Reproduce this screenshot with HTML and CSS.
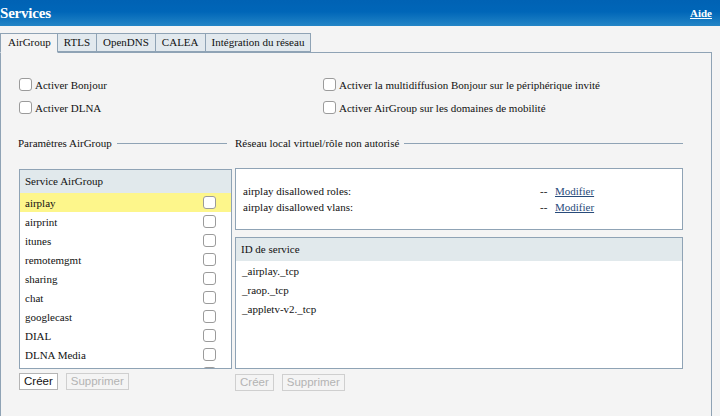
FILE: index.html
```html
<!DOCTYPE html>
<html lang="fr">
<head>
<meta charset="utf-8">
<title>Services</title>
<link rel="stylesheet" href="styles.css">
</head>
<body>
<header class="topbar">
  <h1 class="title">Services</h1>
  <a class="help" href="#">Aide</a>
</header>
<nav class="tabs">
  <span class="tab active">AirGroup</span>
  <span class="tab">RTLS</span>
  <span class="tab">OpenDNS</span>
  <span class="tab">CALEA</span>
  <span class="tab">Intégration du réseau</span>
</nav>
<section class="panel">
  <div class="options">
    <label class="opt"><input type="checkbox" class="cb">Activer Bonjour</label>
    <label class="opt"><input type="checkbox" class="cb">Activer la multidiffusion Bonjour sur le périphérique invité</label>
    <label class="opt"><input type="checkbox" class="cb">Activer DLNA</label>
    <label class="opt"><input type="checkbox" class="cb">Activer AirGroup sur les domaines de mobilité</label>
  </div>
  <div class="cols">
    <div class="col-left">
      <div class="legend legend-left"><span>Paramètres AirGroup</span><i class="rule"></i></div>
      <div class="box list-box">
        <div class="box-head">Service AirGroup</div>
        <ul class="svc-list">
          <li class="svc selected"><span>airplay</span><input type="checkbox" class="cb"></li>
          <li class="svc"><span>airprint</span><input type="checkbox" class="cb"></li>
          <li class="svc"><span>itunes</span><input type="checkbox" class="cb"></li>
          <li class="svc"><span>remotemgmt</span><input type="checkbox" class="cb"></li>
          <li class="svc"><span>sharing</span><input type="checkbox" class="cb"></li>
          <li class="svc"><span>chat</span><input type="checkbox" class="cb"></li>
          <li class="svc"><span>googlecast</span><input type="checkbox" class="cb"></li>
          <li class="svc"><span>DIAL</span><input type="checkbox" class="cb"></li>
          <li class="svc"><span>DLNA Media</span><input type="checkbox" class="cb"></li>
          <li class="svc"><span></span><input type="checkbox" class="cb"></li>
        </ul>
      </div>
      <div class="btns">
        <button class="btn">Créer</button>
        <button class="btn" disabled>Supprimer</button>
      </div>
    </div>
    <div class="col-right">
      <div class="legend"><span>Réseau local virtuel/rôle non autorisé</span><i class="rule"></i></div>
      <div class="box disallow">
        <div class="drow"><span class="dlabel">airplay disallowed roles:</span><span class="dval">--</span><a href="#" class="mod">Modifier</a></div>
        <div class="drow"><span class="dlabel">airplay disallowed vlans:</span><span class="dval">--</span><a href="#" class="mod">Modifier</a></div>
      </div>
      <div class="box id-box">
        <div class="box-head">ID de service</div>
        <ul class="id-list">
          <li>_airplay._tcp</li>
          <li>_raop._tcp</li>
          <li>_appletv-v2._tcp</li>
        </ul>
      </div>
      <div class="btns btns-right">
        <button class="btn" disabled>Créer</button>
        <button class="btn" disabled>Supprimer</button>
      </div>
    </div>
  </div>
  <div class="next-legend">Paramètres Chat Bonjour</div>
</section>
</body>
</html>
```

FILE: styles.css
```css
* { box-sizing: border-box; }
html, body { margin: 0; padding: 0; }
body {
  width: 720px;
  height: 416px;
  overflow: hidden;
  background: #f4f4f4;
  font-family: "Liberation Serif", "Times New Roman", serif;
  font-size: 11px;
  color: #111;
}
.topbar {
  height: 26px;
  background: linear-gradient(#0062b4, #0066b8 45%, #2385c6);
  display: flex;
  align-items: center;
  justify-content: space-between;
  padding: 0 8px 0 0;
}
.title {
  margin: 0;
  font-size: 15px;
  font-weight: bold;
  color: #fff;
  letter-spacing: -0.2px;
}
.help {
  color: #fff;
  font-weight: bold;
  font-size: 11px;
  text-decoration: underline;
}
.tabs {
  display: flex;
  align-items: flex-end;
  margin-top: 7px;
  height: 19px;
}
.tab {
  height: 19px;
  line-height: 17px;
  padding: 0 6px;
  border: 1px solid #8fa3b5;
  border-left: none;
  background: #e2e9ee;
  color: #111;
}
.tab:first-child { border-left: 1px solid #8fa3b5; }
.tab.active {
  background: #f4f4f4;
  padding: 0 6px 0 7px;
  height: 20px;
  margin-bottom: -1px;
  border-bottom-color: #f4f4f4;
  position: relative;
  z-index: 1;
}
.panel {
  width: 712px;
  height: 400px;
  border: 1px solid #8fa3b5;
  border-bottom: none;
  padding: 25px 0 0 18px;
}
.options {
  display: grid;
  grid-template-columns: 304px 1fr;
  row-gap: 10px;
}
.opt {
  display: flex;
  align-items: center;
  height: 13px;
}
.cb {
  -webkit-appearance: none;
  appearance: none;
  width: 13px;
  height: 13px;
  margin: 0 3px 0 0;
  border: 1px solid #9b9b9b;
  border-radius: 3px;
  background: #fff;
  flex: none;
}
.cols {
  display: grid;
  grid-template-columns: 213px 448px;
  column-gap: 3px;
  margin-top: 22px;
}
.legend {
  display: flex;
  align-items: center;
  height: 14px;
  white-space: nowrap;
}
.legend-left { padding-right: 5px; margin-left: -1px; }
.rule {
  flex: 1;
  height: 1px;
  background: #8fa3b5;
  margin-left: 5px;
}
.box {
  border: 1px solid #8fa3b5;
  background: #fff;
}
.list-box {
  margin-top: 19px;
  height: 200px;
  overflow: hidden;
}
.box-head {
  height: 23px;
  line-height: 22px;
  background: #e1e9ec;
  padding-left: 5px;
}
.svc-list, .id-list {
  list-style: none;
  margin: 0;
  padding: 0;
}
.svc {
  height: 19px;
  display: flex;
  align-items: center;
  justify-content: space-between;
  padding: 0 15px 0 5px;
}
.svc .cb { margin: 0; }
.svc.selected { background: #fdf68b; }
.btns {
  display: flex;
  gap: 8px;
  margin-top: 4px;
}
.btns-right { margin-top: 5px; }
.btn {
  font-family: "Liberation Sans", Arial, sans-serif;
  font-size: 11.5px;
  height: 17px;
  padding: 0 4px;
  background: #fff;
  border: 1px solid #b5b5b5;
  color: #111;
  line-height: 13px;
}
.btn:disabled {
  color: #b3b3b3;
  background: #f4f4f4;
  border-color: #cfcfcf;
}
.disallow {
  margin-top: 18px;
  height: 62px;
  padding: 14px 0 0 7px;
}
.drow {
  display: flex;
  height: 16px;
  align-items: center;
}
.dlabel { width: 297px; }
.dval { width: 15px; }
.mod { color: #284b7a; text-decoration: underline; }
.id-box {
  margin-top: 7px;
  height: 132px;
}
.id-list { padding: 1px 0 0 6px; }
.id-list li {
  height: 19px;
  line-height: 19px;
}
.next-legend {
  margin-top: 22px;
  margin-left: -2px;
}
```
